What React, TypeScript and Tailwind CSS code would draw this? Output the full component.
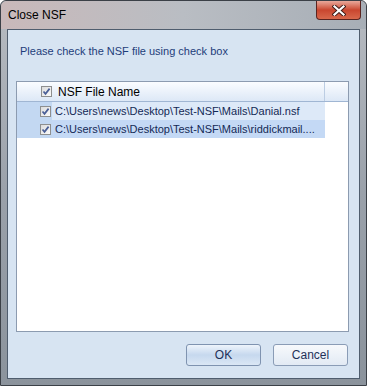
import { useState } from 'react';

type NsfRow = { path: string; checked: boolean };

function CheckBox({ checked, onChange }: { checked: boolean; onChange?: () => void }) {
  return (
    <button
      onClick={onChange}
      className="w-[11px] h-[11px] border border-[#8e8f8f] bg-gradient-to-br from-[#dcdcdc] to-[#fbfbfb] flex items-center justify-center shrink-0"
    >
      {checked && (
        <svg width="9" height="9" viewBox="0 0 9 9">
          <path d="M1.5 4.5 L3.5 6.8 L7.6 1.6" fill="none" stroke="#4a5f97" strokeWidth="1.7" />
        </svg>
      )}
    </button>
  );
}

function App() {
  const [rows, setRows] = useState<NsfRow[]>([
    { path: 'C:\\Users\\news\\Desktop\\Test-NSF\\Mails\\Danial.nsf', checked: true },
    { path: 'C:\\Users\\news\\Desktop\\Test-NSF\\Mails\\riddickmail....', checked: true },
  ]);

  const allChecked = rows.every(r => r.checked);

  const toggle = (i: number) => {
    setRows(prev => prev.map((r, idx) => (idx === i ? { ...r, checked: !r.checked } : r)));
  };

  return (
    <div
      className="w-[367px] h-[386px] flex flex-col rounded-t-[6px] border border-[#3b4047] bg-gradient-to-b from-[#b8bcc2] via-[#9aa1aa] to-[#8b939c]"
      style={{ fontFamily: '"Liberation Sans", Arial, sans-serif' }}
    >
      {/* 标题栏 */}
      <div className="h-[28px] flex items-start justify-between shrink-0 bg-gradient-to-r from-[#c9b9ba] via-[#b9bdc3] to-[#a7aeb6] rounded-t-[6px]">
        <div className="pl-[7px] pt-[8px] text-[12px] text-black leading-none">Close NSF</div>
        <div className="mr-[5px] w-[45px] h-[19px] rounded-b-[4px] border border-[#5a2420] border-t-0 bg-gradient-to-b from-[#e8a89b] via-[#c9462f] to-[#d8684c] flex items-center justify-center">
          <svg width="14" height="11" viewBox="0 0 14 11">
            <path d="M2.5 1.5 L11.5 9.5 M11.5 1.5 L2.5 9.5" stroke="#3b1a16" strokeWidth="4" strokeLinecap="square" />
            <path d="M2.5 1.5 L11.5 9.5 M11.5 1.5 L2.5 9.5" stroke="#ffffff" strokeWidth="2.2" strokeLinecap="square" />
          </svg>
        </div>
      </div>

      {/* 客户区 */}
      <div className="mx-[6px] mb-[6px] flex-1 flex flex-col border border-[#4f5d6e] bg-[#d7e4f2]">
        <div className="pl-[12px] pt-[16px] h-[51px] text-[11px] text-[#1e3d7a] leading-none">
          Please check the NSF file using check box
        </div>

        {/* 列表 */}
        <div className="ml-[8px] w-[333px] h-[251px] bg-white border border-[#8c9bb0] flex flex-col">
          <div className="h-[20px] flex border-b border-[#a0b6d3] bg-gradient-to-b from-[#fafcff] to-[#dde8f6]">
            <div className="w-[308px] flex items-center border-r border-[#bccde3]">
              <div className="w-[24px]" />
              <CheckBox checked={allChecked} onChange={() => setRows(prev => prev.map(r => ({ ...r, checked: !allChecked })))} />
              <span className="ml-[6px] text-[12px] text-black">NSF File Name</span>
            </div>
          </div>
          {rows.map((row, i) => (
            <div key={i} className="h-[18px] flex w-[308px]">
              <div className="w-[35px] bg-[#c3d8f2] flex items-center justify-end pr-[1px]">
                <CheckBox checked={row.checked} onChange={() => toggle(i)} />
              </div>
              <div
                className={`flex-1 flex items-center pl-[3px] text-[11px] text-[#142a55] whitespace-nowrap ${
                  i === 0 ? 'bg-[#dde9f8]' : 'bg-[#c4d9f5]'
                }`}
              >
                {row.path}
              </div>
            </div>
          ))}
        </div>

        {/* 按钮 */}
        <div className="mt-[12px] flex justify-end gap-[12px] pr-[11px]">
          <button className="w-[75px] h-[22px] rounded-[3px] border border-[#7f93b0] bg-gradient-to-b from-[#eef4fb] via-[#c6d8ee] to-[#dbe7f5] text-[12px] text-[#1e3158]">
            OK
          </button>
          <button className="w-[75px] h-[22px] rounded-[3px] border border-[#8a9cb6] bg-gradient-to-b from-[#f7f9fc] to-[#e2eaf4] text-[12px] text-[#1e3158]">
            Cancel
          </button>
        </div>
      </div>
    </div>
  );
}

export default App;
